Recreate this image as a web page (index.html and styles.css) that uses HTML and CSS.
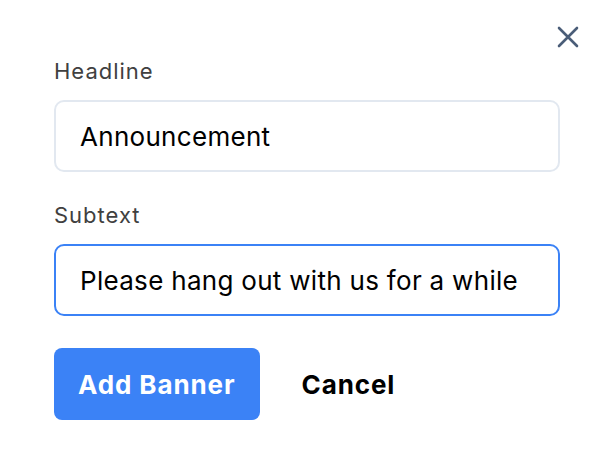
FILE: index.html
```html
<!DOCTYPE html>
<html>
<head>
<meta charset="utf-8">
<link rel="stylesheet" href="styles.css">
</head>
<body>
<div class="dialog">
  <button class="close" aria-label="Close">
    <svg width="24" height="24" viewBox="0 0 24 24"><path d="M3 3 L21 21 M21 3 L3 21" stroke="#4a5d78" stroke-width="2.6" stroke-linecap="round" fill="none"/></svg>
  </button>
  <div class="field">
    <label class="label">Headline</label>
    <div class="input">Announcement</div>
  </div>
  <div class="field">
    <label class="label">Subtext</label>
    <div class="input focused">Please hang out with us for a while</div>
  </div>
  <div class="actions">
    <button class="primary">Add Banner</button>
    <button class="link">Cancel</button>
  </div>
</div>
</body>
</html>
```
FILE: styles.css
```css
html, body {
  margin: 0;
  background: #fff;
}
body {
  font-family: Inter, "Noto Sans", sans-serif;
  width: 614px;
  height: 468px;
}
.dialog {
  position: relative;
  padding: 57px 54px 0 54px;
  display: flex;
  flex-direction: column;
}
.close {
  position: absolute;
  top: 25px;
  right: 34px;
  background: none;
  border: 0;
  padding: 0;
  width: 24px;
  height: 24px;
}
.close svg { display: block; }
.field {
  display: flex;
  flex-direction: column;
  margin-bottom: 29px;
}
.label {
  font-size: 22px;
  line-height: 28px;
  letter-spacing: 1px;
  color: #404040;
  margin-bottom: 15px;
}
.input {
  height: 68px;
  border: 2px solid #e2e8f0;
  border-radius: 10px;
  padding: 0 24px;
  font-size: 26px;
  letter-spacing: 0.3px;
  color: #000;
  display: flex;
  align-items: center;
}
.input.focused {
  border-color: #3b82f6;
}
.actions {
  display: flex;
  align-items: center;
  gap: 18px;
  margin-top: 3px;
}
.primary {
  font-family: inherit;
  font-size: 26px;
  font-weight: 700;
  letter-spacing: 0.9px;
  color: #fff;
  background: #3b82f6;
  border: 0;
  border-radius: 8px;
  height: 72px;
  padding: 0 24px;
}
.link {
  font-family: inherit;
  font-size: 26px;
  font-weight: 700;
  letter-spacing: 0.9px;
  color: #000;
  background: none;
  border: 0;
  height: 72px;
  padding: 0 24px;
}
```
